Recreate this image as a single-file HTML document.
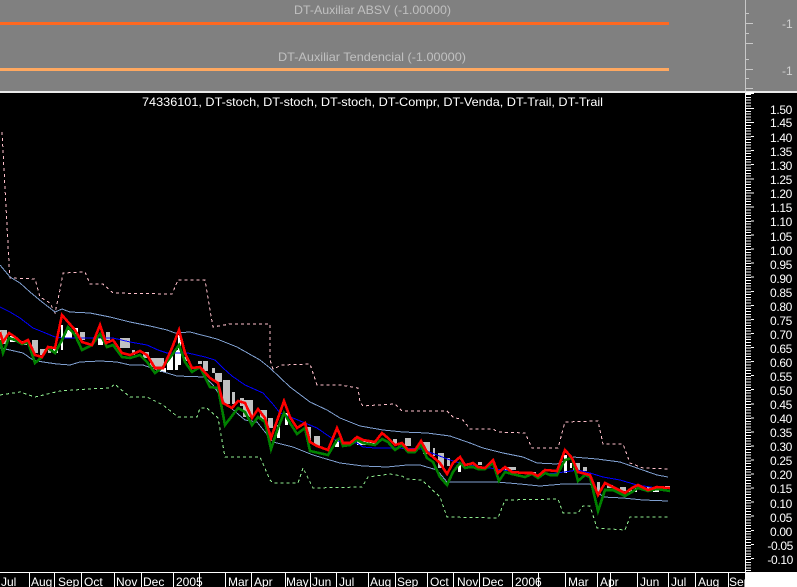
<!DOCTYPE html>
<html>
<head>
<meta charset="utf-8">
<style>
html,body{margin:0;padding:0;background:#000;}
body{width:797px;height:587px;overflow:hidden;}
svg{display:block;}
text{font-family:"Liberation Sans",Arial,sans-serif;font-size:12px;}
</style>
</head>
<body>
<svg width="797" height="587" viewBox="0 0 797 587" xmlns="http://www.w3.org/2000/svg">
<rect width="797" height="587" fill="#000"/>
<rect width="797" height="92" fill="#808080"/>
<rect y="22" width="669" height="3" fill="#ff6820"/>
<rect y="68" width="669" height="3" fill="#ffa860"/>
<g fill="#c0c0c0">
<text x="294" y="14" textLength="157" lengthAdjust="spacingAndGlyphs">DT-Auxiliar ABSV (-1.00000)</text>
<text x="278" y="61" textLength="188" lengthAdjust="spacingAndGlyphs">DT-Auxiliar Tendencial (-1.00000)</text>
<text x="782" y="28" fill="#d0d0d0">-1</text>
<text x="782" y="75" fill="#d0d0d0">-1</text>
</g>
<rect x="745" y="0" width="1" height="92" fill="#c8c8c8"/>
<path d="M746 13.5H749M746 23.5H753M746 33.5H749M746 43.5H753M746 59.5H749M746 69.5H753M746 78.5H749M746 88.5H753" stroke="#c8c8c8" fill="none"/>
<rect x="0" y="91" width="797" height="2" fill="#e8e8e8"/>
<rect x="745" y="93" width="1" height="479" fill="#fff"/>
<rect x="746" y="92" width="8" height="2" fill="#fff"/>
<path d="M748.5 94V572" stroke="#fff" stroke-width="5" stroke-dasharray="1 1.818" fill="none" shape-rendering="crispEdges"/>
<path d="M752.5 108V572" stroke="#fff" stroke-width="3" stroke-dasharray="1 13.06" fill="none" shape-rendering="crispEdges"/>
<text x="142" y="106" fill="#fff" textLength="461" lengthAdjust="spacingAndGlyphs">74336101, DT-stoch, DT-stoch, DT-stoch, DT-Compr, DT-Venda, DT-Trail, DT-Trail</text>
<g fill="#fff" text-anchor="end" letter-spacing="-.35">
<text x="792" y="114">1.50</text><text x="792" y="127">1.45</text><text x="792" y="142">1.40</text><text x="792" y="156">1.35</text><text x="792" y="170">1.30</text><text x="792" y="184">1.25</text><text x="792" y="198">1.20</text><text x="792" y="212">1.15</text><text x="792" y="226">1.10</text><text x="792" y="241">1.05</text><text x="792" y="255">1.00</text><text x="792" y="269">0.95</text><text x="792" y="283">0.90</text><text x="792" y="297">0.85</text><text x="792" y="311">0.80</text><text x="792" y="325">0.75</text><text x="792" y="339">0.70</text><text x="792" y="353">0.65</text><text x="792" y="367">0.60</text><text x="792" y="381">0.55</text><text x="792" y="395">0.50</text><text x="792" y="409">0.45</text><text x="792" y="423">0.40</text><text x="792" y="437">0.35</text><text x="792" y="451">0.30</text><text x="792" y="465">0.25</text><text x="792" y="479">0.20</text><text x="792" y="493">0.15</text><text x="792" y="508">0.10</text><text x="792" y="522">0.05</text><text x="792" y="536">0.00</text><text x="793" y="550">-0.05</text><text x="793" y="564">-0.10</text>
</g>
<g fill="#c0c0c0">
<rect x="0" y="330" width="7" height="14"/><rect x="22" y="341" width="5" height="4"/><rect x="32" y="340" width="6" height="13"/><rect x="40" y="349" width="5" height="6"/><rect x="48" y="350" width="3" height="3"/><rect x="80" y="332" width="5" height="8"/><rect x="106" y="332" width="4" height="8"/><rect x="120" y="338" width="10" height="10"/>
<rect x="132" y="350" width="3" height="5"/><rect x="143" y="352" width="6" height="6"/><rect x="150" y="358" width="14" height="9"/><rect x="183" y="357" width="5" height="4"/><rect x="198" y="361" width="4" height="3"/><rect x="203" y="361" width="5" height="10"/><rect x="212" y="368" width="3" height="5"/><rect x="215" y="373" width="7" height="9"/><rect x="223" y="380" width="7" height="24"/><rect x="232" y="392" width="3" height="12"/><rect x="240" y="398" width="4" height="8"/><rect x="243" y="400" width="10" height="17"/>
<rect x="260" y="410" width="7" height="10"/><rect x="268" y="418" width="5" height="10"/><rect x="307" y="427" width="4" height="15"/><rect x="314" y="436" width="6" height="10"/><rect x="393" y="439" width="4" height="5"/><rect x="405" y="438" width="6" height="8"/><rect x="423" y="442" width="7" height="12"/><rect x="433" y="448" width="2" height="8"/><rect x="438" y="453" width="6" height="15"/><rect x="447" y="458" width="3" height="8"/>
<rect x="478" y="462" width="4" height="3"/><rect x="505" y="467" width="11" height="3"/><rect x="530" y="472" width="6" height="3"/><rect x="573" y="463" width="7" height="8"/><rect x="583" y="467" width="4" height="4"/><rect x="597" y="482" width="3" height="13"/><rect x="607" y="485" width="6" height="3"/><rect x="620" y="487" width="6" height="4"/><rect x="628" y="489" width="4" height="3"/><rect x="647" y="487" width="6" height="3"/>
</g>
<g fill="#fff">
<rect x="10" y="336" width="6" height="6"/><rect x="53" y="347" width="5" height="6"/><rect x="61" y="325" width="2" height="25"/><rect x="65" y="330" width="7" height="8"/><rect x="75" y="328" width="3" height="7"/><rect x="98" y="338" width="5" height="7"/>
<rect x="160" y="368" width="6" height="4"/><rect x="167" y="360" width="3" height="10"/><rect x="170" y="356" width="3" height="14"/><rect x="175" y="350" width="3" height="20"/><rect x="178" y="335" width="3" height="30"/>
<rect x="277" y="425" width="3" height="13"/><rect x="285" y="413" width="3" height="12"/><rect x="335" y="440" width="4" height="7"/><rect x="357" y="441" width="18" height="4"/><rect x="458" y="463" width="3" height="9"/><rect x="564" y="455" width="3" height="18"/><rect x="570" y="463" width="2" height="5"/><rect x="635" y="488" width="2" height="4"/><rect x="653" y="490" width="6" height="2"/><rect x="665" y="486" width="5" height="2"/>
</g>
<g fill="none" stroke-linejoin="miter" shape-rendering="crispEdges">
<polyline stroke="#ffc0cb" stroke-width="1" stroke-dasharray="3 3" points="2,132 9,263 10,278 35,279 40,297 50,303 55,313 60,290 63,273 85,272 90,284 103,284 113,293 172,294 178,280 205,280 210,310 213,327 230,324 270,324 270,360 273,369 282,365 310,364 317,385 340,385 358,388 360,402 363,406 377,405 395,404 402,411 447,411 453,417 463,420 470,429 493,429 498,432 525,433 532,448 558,448 565,422 598,421 603,444 623,444 630,463 643,468 668,469"/>
<polyline stroke="#90ee90" stroke-width="1" stroke-dasharray="3 3" points="0,395 20,392 35,397 60,391 88,389 110,388 115,384 118,387 130,397 147,397 163,405 178,417 197,417 200,408 207,408 218,418 225,457 260,457 270,480 273,483 298,483 303,468 313,488 362,487 368,477 390,474 402,476 407,479 422,480 440,497 447,517 498,518 505,500 558,499 563,513 578,513 583,506 590,506 597,528 625,530 630,517 668,517"/>
<polyline stroke="#7f9fd0" stroke-width="1" points="0,265 10,277 20,283 30,292 42,302 55,312 62,309 70,312 90,313 110,317 130,322 150,326 167,330 175,333 190,332 217,339 237,347 260,360 270,368 290,387 310,402 327,410 340,418 360,426 383,430 403,432 427,433 450,436 470,443 483,448 503,453 523,457 537,463 557,464 573,457 597,459 620,462 637,468 657,475 668,477"/>
<polyline stroke="#7f9fd0" stroke-width="1" points="0,348 10,350 23,353 33,360 43,362 57,364 70,365 80,362 100,361 117,362 130,365 143,365 157,370 177,376 205,377 213,385 225,403 245,420 257,422 273,442 293,447 313,455 323,458 340,463 363,466 387,467 407,465 420,465 437,470 447,482 497,482 520,484 540,486 563,484 590,484 603,497 623,498 643,500 668,501"/>
<polyline stroke="#0000ff" stroke-width="1" points="0,307 10,312 20,318 33,328 43,332 55,337 63,338 83,338 113,338 130,342 147,345 158,350 167,353 188,353 205,357 215,360 223,368 232,376 245,385 263,393 272,403 280,413 293,418 305,423 317,428 330,437 340,442 357,443 363,447 375,448 395,448 421,449 437,455 450,460 460,463 470,465 503,470 520,472 537,475 557,473 578,470 590,473 603,477 620,480 637,485 657,488 670,488"/>
<polyline stroke="#008000" stroke-width="2.6" points="0,340 3,353 9,338 15,340 22,344 28,342 35,363 42,357 48,348 55,353 62,340 68,327 75,335 82,350 92,345 100,334 107,347 113,345 122,357 130,358 140,355 147,362 155,373 163,367 172,355 179,345 185,362 192,372 200,367 210,387 218,388 225,425 238,408 245,412 252,425 258,417 265,422 271,449 278,428 284,413 290,423 297,434 305,428 310,451 328,455 337,440 340,438 343,446 350,445 357,440 363,443 375,445 382,439 388,442 395,450 402,445 408,452 415,452 421,445 427,458 433,462 440,477 447,485 453,472 460,463 465,468 470,467 473,467 478,469 485,469 493,463 499,481 505,472 512,474 525,477 532,474 538,478 545,473 550,475 557,475 565,460 572,458 578,481 585,475 590,477 598,511 605,490 613,490 625,496 632,492 638,488 648,491 657,489 670,491"/>
<polyline stroke="#ff0000" stroke-width="2.6" points="0,332 3,342 9,333 15,337 22,343 28,340 35,355 42,357 48,347 55,348 62,315 68,322 75,330 82,342 92,345 100,325 106,343 113,340 122,353 130,355 140,351 147,355 155,368 163,368 172,348 179,330 185,353 192,368 200,367 210,378 218,383 223,403 232,408 238,401 245,403 252,418 258,409 265,418 271,438 278,418 284,401 290,417 297,428 305,423 310,442 317,446 328,450 337,428 340,435 343,443 350,443 357,437 363,440 375,442 382,433 388,438 395,445 402,443 408,450 415,450 421,441 427,452 433,457 440,463 447,474 453,463 460,457 465,465 470,464 473,463 478,467 485,468 493,460 498,473 505,467 512,472 525,473 532,473 538,476 545,470 557,471 565,450 572,458 578,472 590,475 598,495 605,483 613,487 625,493 632,488 638,485 648,490 657,487 670,488"/>
</g>
<g fill="#fff">
<text x="1" y="586">Jul</text><text x="31" y="586">Aug</text><text x="58" y="586">Sep</text><text x="84" y="586">Oct</text><text x="116" y="586">Nov</text><text x="143" y="586">Dec</text><text x="176" y="586">2005</text><text x="228" y="586">Mar</text><text x="254" y="586">Apr</text><text x="286" y="586">May</text><text x="312" y="586">Jun</text><text x="339" y="586">Jul</text><text x="370" y="586">Aug</text><text x="397" y="586">Sep</text><text x="430" y="586">Oct</text><text x="457" y="586">Nov</text><text x="482" y="586">Dec</text><text x="515" y="586">2006</text><text x="568" y="586">Mar</text><text x="600" y="586">Apr</text><text x="640" y="586">Jun</text><text x="671" y="586">Jul</text><text x="698" y="586">Aug</text><text x="729" y="586">Sep</text>
</g>
<path d="M29.500 572V587M54.500 572V587M81.500 572V587M114.500 572V587M141.500 572V587M173.500 572V587M199.500 572V587M225.500 572V587M251.500 572V587M285.500 572V587M310.500 572V587M336.500 572V587M368.500 572V587M395.500 572V587M427.500 572V587M453.500 572V587M479.500 572V587M512.500 572V587M538.500 572V587M565.500 572V587M597.500 572V587M610.500 572V587M637.500 572V587M668.500 572V587M695.500 572V587M728.500 572V587" stroke="#fff" fill="none"/>
<rect x="0" y="572" width="746" height="1" fill="#fff"/>
<rect x="745" y="572" width="52" height="15" fill="#fff"/>
</svg>
</body>
</html>
